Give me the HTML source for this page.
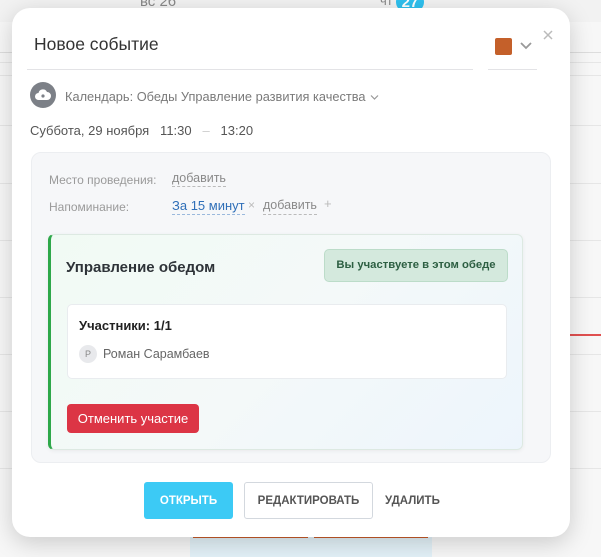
<!DOCTYPE html>
<html><head><meta charset="utf-8"><style>
*{box-sizing:border-box;margin:0;padding:0}
body{width:601px;height:557px;overflow:hidden;background:#f7f7f7;font-family:"Liberation Sans","DejaVu Sans",sans-serif;position:relative}
.a{position:absolute;white-space:nowrap}
.hl{position:absolute;left:0;right:0;height:1px;background:#e6e6e6}
</style></head><body>
<div class="a" style="left:0;right:0;top:0;height:22px;background:#f2f2f2"></div>
<div class="a" style="left:140px;top:-7px;font-size:15px;color:#888">вс 26</div>
<div class="a" style="left:380px;top:-7px;font-size:13px;color:#888">чт</div>
<div class="a" style="left:396px;top:-8px;width:28px;height:20px;border-radius:10px;background:#2fc0ee;color:#fff;font-size:15px;font-weight:bold;text-align:center;line-height:22px">27</div>
<div class="hl" style="top:52px;background:#ddd"></div>
<div class="hl" style="top:62px"></div>
<div class="hl" style="top:75px"></div>
<div class="hl" style="top:125px"></div>
<div class="hl" style="top:183px"></div>
<div class="hl" style="top:240px"></div>
<div class="hl" style="top:297px"></div>
<div class="hl" style="top:354px"></div>
<div class="hl" style="top:411px"></div>
<div class="hl" style="top:468px"></div>
<div class="a" style="left:570px;top:334px;width:31px;height:2px;background:#e05050"></div>
<div class="a" style="left:190px;top:530px;width:242px;height:27px;background:#e3f1f8"></div>
<div class="a" style="left:193px;top:535px;width:115px;height:3px;background:#c65a2a"></div>
<div class="a" style="left:314px;top:535px;width:114px;height:3px;background:#c65a2a"></div>

<div class="a" style="left:12px;top:8px;width:558px;height:529px;background:#fff;border-radius:18px;box-shadow:0 6px 24px rgba(0,0,0,.18)">
 <div class="a" style="left:22px;top:26px;font-size:17.5px;color:#333">Новое событие</div>
 <div class="a" style="left:15px;top:61px;width:446px;height:1px;background:#e3e3e6"></div>
 <div class="a" style="left:476px;top:61px;width:49px;height:1px;background:#e3e3e6"></div>
 <div class="a" style="left:483px;top:30px;width:17px;height:17px;background:#c4602a;border-radius:2px"></div>
 <svg class="a" style="left:508px;top:33px" width="12" height="10" viewBox="0 0 12 10"><path d="M1 2l5 5 5-5" stroke="#999" stroke-width="1.8" fill="none"/></svg>
 <svg class="a" style="left:531px;top:22px" width="10" height="10" viewBox="0 0 10 10"><path d="M1 1l8 8M9 1l-8 8" stroke="#bbb" stroke-width="1.5"/></svg>
 <div class="a" style="left:18px;top:74px;width:26px;height:26px;border-radius:50%;background:#7c8087"></div>
 <svg class="a" style="left:22px;top:81px" width="18" height="12" viewBox="0 0 18 12"><path d="M4.5 11a3.5 3.5 0 0 1 0-7 4.5 4.5 0 0 1 8.5-1 4 4 0 0 1 0 8z" fill="#fff"/><circle cx="9" cy="7" r="1.6" fill="#7c8087"/></svg>
 <div class="a" style="left:53px;top:81px;font-size:12.8px;color:#7a7a7a">Календарь: Обеды Управление развития качества</div>
 <svg class="a" style="left:358px;top:86px" width="9" height="7" viewBox="0 0 9 7"><path d="M1 1.5l3.5 3.5 3.5-3.5" stroke="#999" stroke-width="1.2" fill="none"/></svg>
 <div class="a" style="left:18px;top:115px;font-size:13px;color:#555;white-space:pre">Суббота, 29 ноября   11:30   <span style="color:#ccc">–</span>   13:20</div>

 <div class="a" style="left:19px;top:144px;width:520px;height:311px;background:#f6f7f9;border:1px solid #eceef1;border-radius:10px">
  <div class="a" style="left:17px;top:20px;font-size:12px;color:#9a9a9a">Место проведения:</div>
  <div class="a" style="left:140px;top:17px;font-size:12.5px;color:#8a8a8a;border-bottom:1px dashed #bbb;line-height:16px">добавить</div>
  <div class="a" style="left:17px;top:47px;font-size:12px;color:#9a9a9a">Напоминание:</div>
  <div class="a" style="left:140px;top:44px;font-size:13px;color:#2f6fb8;border-bottom:1px dashed #9bb9dd;line-height:17px">За 15 минут</div>
  <div class="a" style="left:216px;top:45px;font-size:12px;color:#bbb">×</div>
  <div class="a" style="left:231px;top:44px;font-size:12.5px;color:#8a8a8a;border-bottom:1px dashed #bbb;line-height:17px">добавить</div>
  <div class="a" style="left:292px;top:43px;font-size:13px;color:#bbb">+</div>

  <div class="a" style="left:16px;top:81px;width:475px;height:216px;border-radius:6px;border:1px solid #dde9e2;border-left:3px solid #2ea84a;background:linear-gradient(135deg,#f1faf4 0%,#f4f9f9 50%,#edf5fc 100%);box-shadow:0 1px 4px rgba(0,0,0,.06)">
   <div class="a" style="left:15px;top:24px;font-size:15px;font-weight:bold;color:#2e3338">Управление обедом</div>
   <div class="a" style="left:273px;top:14px;width:184px;height:33px;background:#d4e9dd;border:1px solid #bcdcc9;border-radius:5px;font-size:11.3px;font-weight:bold;color:#2d5f42;text-align:center;line-height:31px">Вы участвуете в этом обеде</div>
   <div class="a" style="left:16px;top:69px;width:440px;height:75px;background:#fff;border:1px solid #e9ecef;border-radius:5px">
    <div class="a" style="left:11px;top:13px;font-size:13px;font-weight:bold;color:#222">Участники: 1/1</div>
    <div class="a" style="left:11px;top:40px;width:18px;height:18px;border-radius:50%;background:#e8e9ec;font-size:9px;color:#888;text-align:center;line-height:18px">Р</div>
    <div class="a" style="left:35px;top:42px;font-size:12.5px;color:#666">Роман Сарамбаев</div>
   </div>
   <div class="a" style="left:16px;top:169px;width:132px;height:29px;background:#dc3545;border-radius:4px;color:#fff;font-size:13px;text-align:center;line-height:29px">Отменить участие</div>
  </div>
 </div>

 <div class="a" style="left:132px;top:474px;width:89px;height:37px;background:#3ccaf5;border-radius:3px;color:#fff;font-size:11.5px;font-weight:bold;text-align:center;line-height:39px">ОТКРЫТЬ</div>
 <div class="a" style="left:232px;top:474px;width:129px;height:37px;border:1px solid #d3d8de;border-radius:3px;color:#555;font-size:11.5px;font-weight:bold;text-align:center;line-height:37px">РЕДАКТИРОВАТЬ</div>
 <div class="a" style="left:373px;top:474px;height:37px;color:#555;font-size:11.5px;font-weight:bold;line-height:39px">УДАЛИТЬ</div>
</div>
</body></html>
